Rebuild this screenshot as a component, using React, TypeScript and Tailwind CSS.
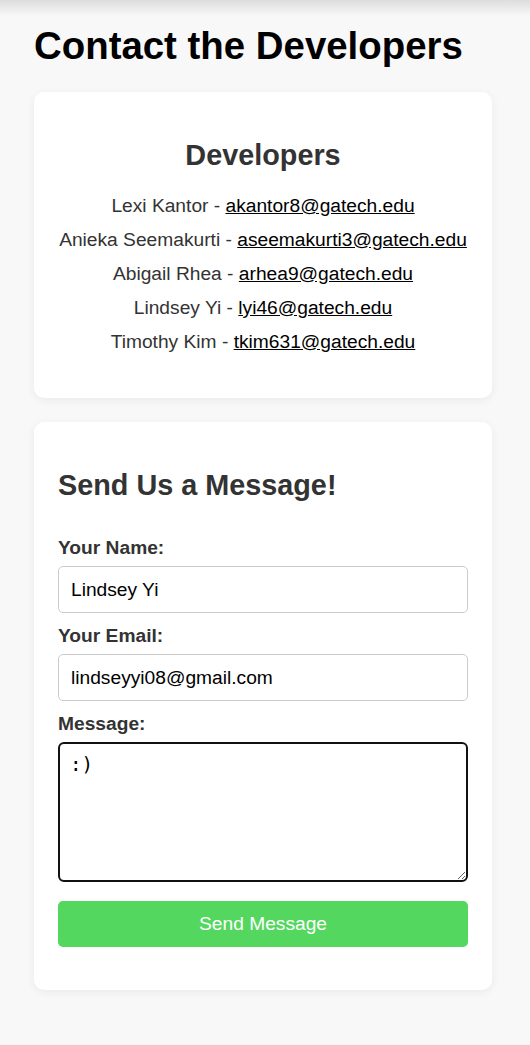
import { useEffect, useRef } from "react";

const developers = [
  { name: "Lexi Kantor", email: "akantor8@gatech.edu" },
  { name: "Anieka Seemakurti", email: "aseemakurti3@gatech.edu" },
  { name: "Abigail Rhea", email: "arhea9@gatech.edu" },
  { name: "Lindsey Yi", email: "lyi46@gatech.edu" },
  { name: "Timothy Kim", email: "tkim631@gatech.edu" },
];

const App = () => {
  const msgRef = useRef<HTMLTextAreaElement>(null);

  // keep the caret sitting after the text, like in the screenshot
  useEffect(() => {
    const el = msgRef.current;
    if (el) {
      el.focus();
      el.setSelectionRange(el.value.length, el.value.length);
    }
  }, []);

  return (
    <div className="relative min-h-[1045px] bg-[#f8f8f8] pt-[24px] pl-[34px] pr-[38px] pb-[55px] font-['Liberation_Sans',Arial,sans-serif]">
      {/* shadow from the header above */}
      <div className="pointer-events-none absolute inset-x-0 top-0 h-[16px] bg-gradient-to-b from-[#dddddd] to-[#f8f8f8]" />

      <h1 className="relative text-[38.4px] leading-[44px] font-bold text-black mb-[24px]">
        Contact the Developers
      </h1>

      <div className="bg-white rounded-[10px] shadow-[0_2px_10px_rgba(0,0,0,0.06)] pt-[46px] pb-[39px] px-[24px] text-center">
        <h2 className="text-[28.8px] leading-[34px] font-bold text-[#333] mb-[17px]">Developers</h2>
        {developers.map((dev) => (
          <p key={dev.email} className="text-[19.2px] leading-[34px] text-[#333]">
            {dev.name} -{" "}
            <a href={`mailto:${dev.email}`} className="text-black underline">
              {dev.email}
            </a>
          </p>
        ))}
      </div>

      <div className="mt-[24px] bg-white rounded-[10px] shadow-[0_2px_10px_rgba(0,0,0,0.06)] pt-[46px] pb-[43px] px-[24px]">
        <h2 className="text-[28.8px] leading-[34px] font-bold text-[#333] mb-[35px]">Send Us a Message!</h2>

        <form className="flex flex-col" onSubmit={(e) => e.preventDefault()}>
          <label className="text-[19.2px] leading-[22px] font-bold text-[#333] mb-[7px]">Your Name:</label>
          <input
            type="text"
            defaultValue="Lindsey Yi"
            className="h-[47px] border border-[#cccccc] rounded-[5px] px-[12px] text-[19.2px] text-black outline-none mb-[12px]"
          />

          <label className="text-[19.2px] leading-[22px] font-bold text-[#333] mb-[7px]">Your Email:</label>
          <input
            type="email"
            defaultValue="lindseyyi08@gmail.com"
            className="h-[47px] border border-[#cccccc] rounded-[5px] px-[12px] text-[19.2px] text-black outline-none mb-[12px]"
          />

          <label className="text-[19.2px] leading-[22px] font-bold text-[#333] mb-[7px]">Message:</label>
          <textarea
            ref={msgRef}
            defaultValue=":)"
            className="h-[140px] border-2 border-[#111] rounded-[6px] px-[10px] py-[10px] text-[19.2px] leading-[22px] text-black outline-none font-['DejaVu_Sans_Mono',monospace] mb-[19px]"
          />

          <button
            type="submit"
            className="h-[46px] bg-[#53d75f] text-white text-[19.2px] rounded-[5px]"
          >
            Send Message
          </button>
        </form>
      </div>
    </div>
  );
};

export default App;
